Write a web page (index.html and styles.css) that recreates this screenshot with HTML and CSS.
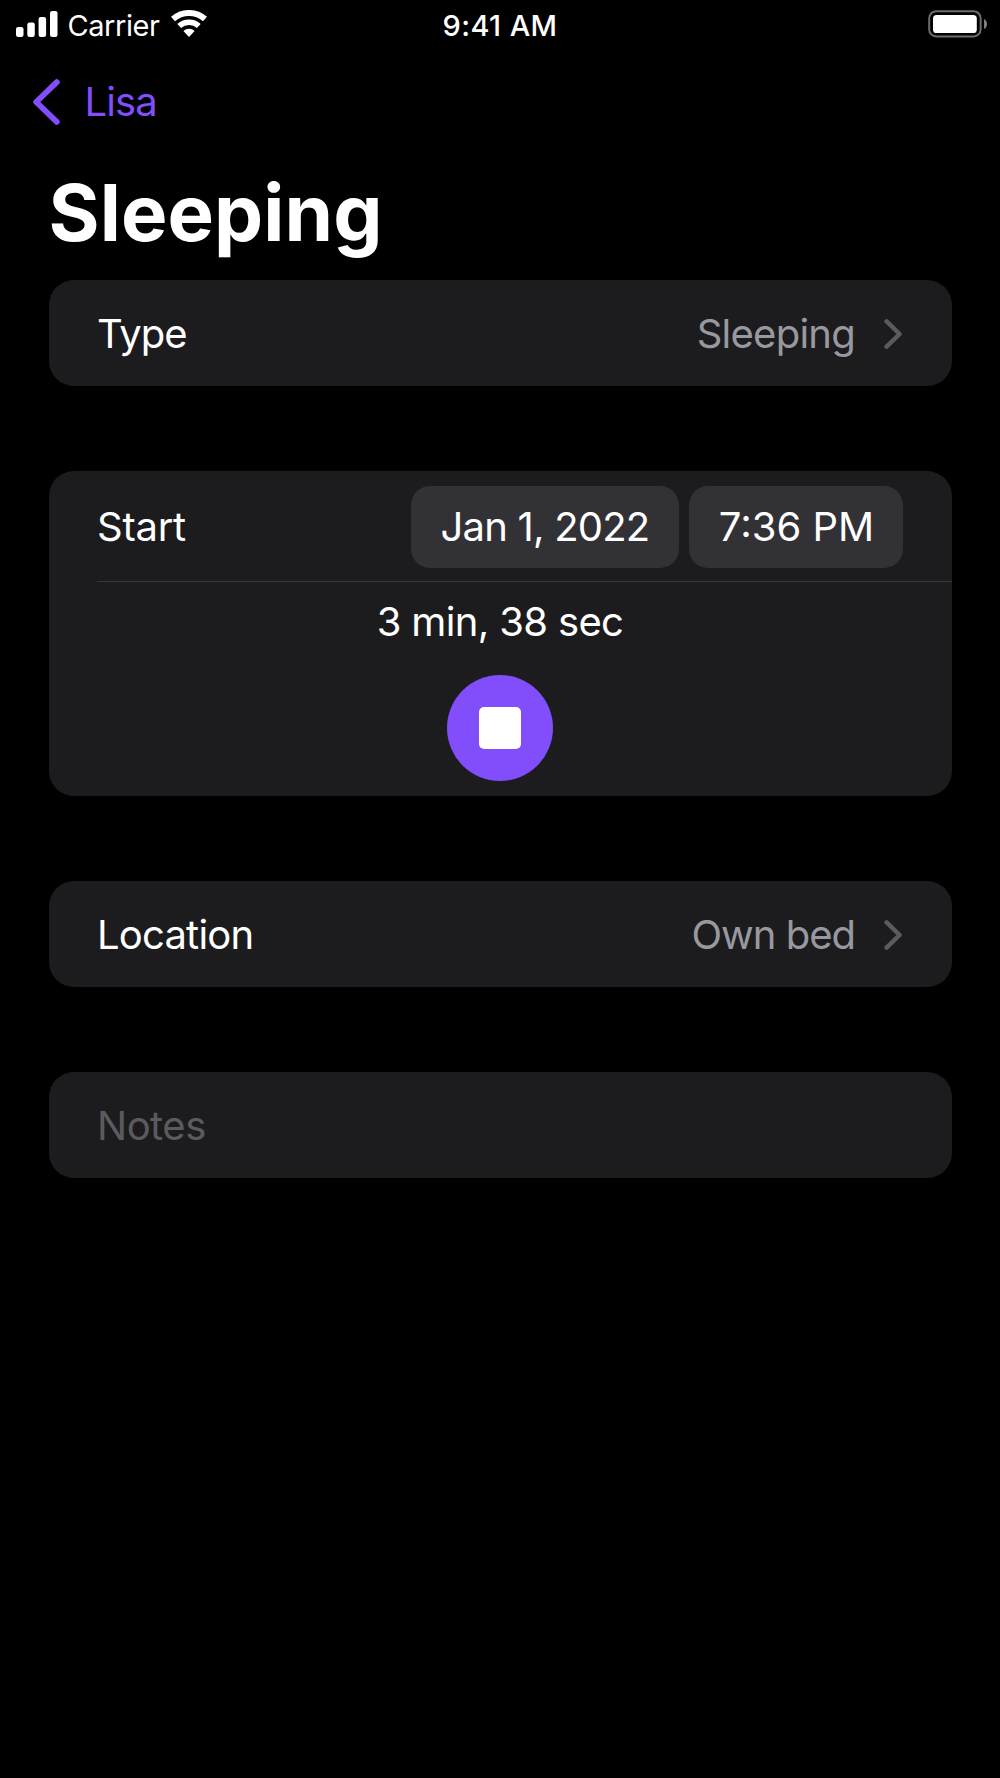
FILE: index.html
```html
<!DOCTYPE html>
<html lang="en">
<head>
<meta charset="UTF-8" />
<title>Sleeping</title>
<link rel="stylesheet" href="styles.css">
</head>
<body>

<header class="status-bar">
  <div class="status-left">
    <svg class="signal" width="42" height="26" viewBox="0 0 42 26" fill="#fff">
      <rect x="0" y="16" width="7.5" height="10" rx="2.2" />
      <rect x="11.3" y="11.5" width="7.5" height="14.5" rx="2.2" />
      <rect x="22.6" y="6" width="7.5" height="20" rx="2.2" />
      <rect x="34" y="0" width="7.5" height="26" rx="2.2" />
    </svg>
    <span class="carrier">Carrier</span>
    <svg class="wifi" width="38" height="28" viewBox="0 0 38 28" fill="none" stroke="#fff">
      <path d="M3 9.1 A24 24 0 0 1 35 9.1" stroke-width="6" />
      <path d="M9.2 16 A14.7 14.7 0 0 1 28.8 16" stroke-width="5.6" />
      <path d="M13.4 20.9 A8.3 8.3 0 0 1 24.6 20.9 L19 27 Z" fill="#fff" stroke="none" />
    </svg>
  </div>
  <span class="clock">9:41 AM</span>
  <svg class="battery" width="60" height="28" viewBox="0 0 60 28">
    <rect x="1.2" y="1.2" width="51.4" height="25.2" rx="7" fill="none" stroke="#6c6c6c" stroke-width="2" />
    <rect x="5" y="5" width="43.8" height="18" rx="3.6" fill="#fff" />
    <path d="M56 9 Q59 10.5 59 14 Q59 17.5 56 19 Z" fill="#808080" />
  </svg>
</header>

<nav class="nav-bar">
  <a class="back" href="#">
    <svg width="28" height="46" viewBox="0 0 28 46" fill="none" stroke="#824dfb" stroke-width="5.8" stroke-linecap="round" stroke-linejoin="round">
      <path d="M24.8 3.2 L4.2 23 L24.8 42.8" />
    </svg>
    <span>Lisa</span>
  </a>
</nav>

<main>
  <h1>Sleeping</h1>

  <section class="card row">
    <span class="label label-type">Type</span>
    <span class="value value-sleeping">Sleeping</span>
    <svg class="chevron" width="18" height="30" viewBox="0 0 18 30" fill="none" stroke="#5b5b5f" stroke-width="4.4" stroke-linecap="round" stroke-linejoin="round">
      <path d="M2.6 2.4 L15.6 15 L2.6 27.6" />
    </svg>
  </section>

  <section class="card timer">
    <div class="row start-row">
      <span class="label label-start">Start</span>
      <button class="pill pill-date">Jan 1, 2022</button>
      <button class="pill pill-time">7:36 PM</button>
    </div>
    <div class="elapsed">
      <span class="duration">3 min, 38 sec</span>
      <button class="stop" aria-label="Stop"><span class="stop-icon"></span></button>
    </div>
  </section>

  <section class="card row">
    <span class="label label-location">Location</span>
    <span class="value value-bed">Own bed</span>
    <svg class="chevron" width="18" height="30" viewBox="0 0 18 30" fill="none" stroke="#5b5b5f" stroke-width="4.4" stroke-linecap="round" stroke-linejoin="round">
      <path d="M2.6 2.4 L15.6 15 L2.6 27.6" />
    </svg>
  </section>

  <section class="card row">
    <input class="notes" type="text" placeholder="Notes">
  </section>
</main>

</body>
</html>
```
FILE: styles.css
```css
* {
  box-sizing: border-box;
}
body {
  margin: 0;
  min-height: 100vh;
  background: #000;
  color: #fff;
  font-family: Inter, "Liberation Sans", sans-serif;
  font-size: 40px;
  line-height: 50px;
}
button, input {
  font: inherit;
  color: inherit;
  border: none;
  padding: 0;
  background: none;
}
svg {
  display: block;
  flex: none;
}
.status-bar {
  display: grid;
  grid-template-columns: 1fr auto 1fr;
  align-items: center;
  height: 48px;
  padding: 0 12px 0 16px;
  font-size: 29px;
  line-height: 36px;
}
.status-left {
  display: flex;
  align-items: center;
}
.carrier {
  margin: 3px 0 0 9.5px;
  letter-spacing: -0.45px;
}
.wifi {
  margin-left: 11px;
}
.clock {
  font-weight: 500;
  margin: 3px 4px 0 0;
  letter-spacing: 0.4px;
}
.battery {
  justify-self: end;
}
.nav-bar {
  height: 106px;
  padding: 29px 32px 0;
}
.back {
  display: inline-flex;
  align-items: center;
  gap: 24.5px;
  color: #824dfb;
  text-decoration: none;
  letter-spacing: -0.9px;
}
main {
  padding: 0 48.5px;
}
h1 {
  margin: 0;
  height: 126px;
  padding-top: 9px;
  font-size: 78px;
  line-height: 100px;
  font-weight: 700;
  letter-spacing: 0.1px;
}
.card {
  background: #1c1c1e;
  border-radius: 25px;
  margin-bottom: 85px;
}
.row {
  display: flex;
  align-items: center;
  height: 106px;
  padding: 2px 48.5px 0;
}
.label {
  margin-right: auto;
}
.label-type {
  letter-spacing: -1px;
}
.label-start {
  letter-spacing: -0.25px;
}
.label-location {
  letter-spacing: -0.8px;
}
.value {
  color: #98989f;
}
.value-sleeping {
  letter-spacing: -0.75px;
}
.value-bed {
  letter-spacing: -1px;
}
.chevron {
  margin: 0 1.5px 1px 28.5px;
}
.timer {
  height: 325px;
}
.start-row {
  height: 110px;
  padding-top: 2px;
  gap: 10px;
}
.pill {
  height: 82px;
  border-radius: 19px;
  background: #323136;
}
.pill-date {
  width: 268px;
  letter-spacing: -0.8px;
}
.pill-time {
  width: 214px;
  padding-left: 1px;
}
.elapsed {
  display: flex;
  flex-direction: column;
  align-items: center;
  margin-left: 48.5px;
  padding: 15px 48.5px 0 0;
  border-top: 1.5px solid #363638;
}
.duration {
  letter-spacing: -0.65px;
}
.stop {
  display: flex;
  align-items: center;
  justify-content: center;
  width: 106px;
  height: 106px;
  margin-top: 28px;
  border-radius: 50%;
  background: #824dfb;
}
.stop-icon {
  width: 42px;
  height: 42px;
  border-radius: 5px;
  background: #fff;
}
.notes {
  width: 100%;
  outline: none;
  letter-spacing: -0.5px;
}
.notes::placeholder {
  color: #5b5b5f;
  opacity: 1;
}
```
